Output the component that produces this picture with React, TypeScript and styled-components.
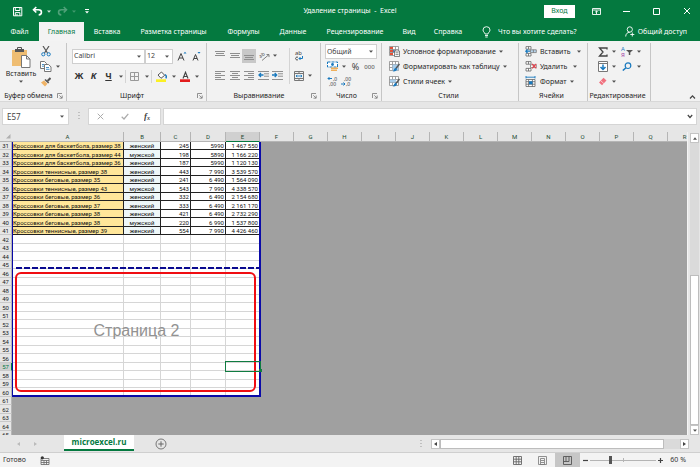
import React from "react";
import styled, { createGlobalStyle, css } from "styled-components";

const GREEN = "#04793f";
const UI = `"Noto Sans", "Open Sans", sans-serif`;
const SHEET = `Roboto, "Open Sans", sans-serif`;

const GlobalStyle = createGlobalStyle`
  *, *::before, *::after { box-sizing: border-box; }
  body { margin: 0; font-family: ${UI}; font-size: 7px; line-height: 10px; color: #262626; }
  button, input, select { font: inherit; color: inherit; margin: 0; padding: 0; border: 0; background: none; border-radius: 0; }
  button { display: inline-flex; align-items: center; justify-content: center; cursor: pointer; white-space: nowrap; }
  svg { display: block; flex: none; }
`;

const Window = styled.div`
  display: flex;
  flex-direction: column;
  height: 100vh;
  overflow: hidden;
  background: #e6e6e6;
`;

/* ---------- title bar ---------- */
const TitleBar = styled.header`
  display: grid;
  grid-template-columns: 1fr auto 1fr;
  align-items: center;
  height: 22px;
  flex: none;
  background: ${GREEN};
  color: #fff;
`;
const QuickAccess = styled.div`
  display: flex;
  align-items: center;
  padding-left: 12px;
  gap: 4px;
`;
const QuickButton = styled.button<{ $gap?: number; $dim?: boolean }>`
  margin-left: ${(p) => p.$gap ?? 0}px;
  opacity: ${(p) => (p.$dim ? 0.3 : 1)};
`;
const Title = styled.h1`
  margin: 0;
  font-size: 7px;
  font-weight: 400;
  white-space: pre;
`;
const WindowControls = styled.div`
  display: flex;
  align-items: center;
  justify-content: flex-end;
  padding-right: 9px;
`;
const SignIn = styled.button`
  width: 31px;
  height: 13px;
  margin-right: 16px;
  background: #fff;
  color: ${GREEN};
`;
const ControlButton = styled.button<{ $w: number }>`
  width: ${(p) => p.$w}px;
  height: 14px;
  justify-content: flex-end;
`;

/* ---------- ribbon tabs ---------- */
const TabBar = styled.nav`
  display: flex;
  height: 19px;
  flex: none;
  background: ${GREEN};
  color: #fff;
`;
const RibbonTab = styled.button<{ $w: number; $active?: boolean }>`
  width: ${(p) => p.$w}px;
  height: 19px;
  ${(p) => p.$active && css`background: #f3f3f3; color: ${GREEN};`}
`;
const TellMe = styled.button`
  margin-left: 10px;
  gap: 7px;
`;
const Share = styled.button`
  margin-left: auto;
  margin-right: 13px;
  gap: 3px;
`;

/* ---------- ribbon ---------- */
const Ribbon = styled.section`
  display: flex;
  height: 61px;
  flex: none;
  padding-top: 2px;
  background: #f2f2f2;
  border-bottom: 1px solid #d8d8d8;
`;
const Group = styled.div<{ $w: number }>`
  display: flex;
  flex-direction: column;
  width: ${(p) => p.$w}px;
  border-right: 1px solid #c6c6c6;
`;
const GroupBody = styled.div`
  flex: 1;
  min-height: 0;
  padding-top: 1px;
`;
const GroupFooter = styled.div`
  display: flex;
  align-items: center;
  height: 10px;
  padding-right: 3px;
  white-space: nowrap;
`;
const GroupLabel = styled.span`
  flex: 1;
  text-align: center;
`;
const Collapse = styled.button`
  align-self: flex-end;
  margin: 0 4px 1px auto;
`;
const ToolRow = styled.div<{ $h: number; $gap?: number; $pad?: number }>`
  display: flex;
  align-items: center;
  height: ${(p) => p.$h}px;
  gap: ${(p) => p.$gap ?? 0}px;
  padding-left: ${(p) => p.$pad ?? 0}px;
`;
const Tool = styled.button<{ $w: number; $on?: boolean }>`
  width: ${(p) => p.$w}px;
  height: 14px;
  background: ${(p) => (p.$on ? "#c8c8c8" : "transparent")};
`;
const SplitRule = styled.span<{ $h: number }>`
  width: 1px;
  height: ${(p) => p.$h}px;
  background: #d4d4d4;
`;
const ClipboardGrid = styled.div`
  display: grid;
  grid-template-columns: 38px 1fr;
  height: 100%;
  padding-left: 2px;
`;
const PasteButton = styled.button`
  flex-direction: column;
  justify-content: flex-start;
  padding-top: 3px;
  gap: 1px;
`;
const Stack = styled.div`
  display: flex;
  flex-direction: column;
`;
const SelectBox = styled.label<{ $w: number }>`
  display: flex;
  align-items: center;
  width: ${(p) => p.$w}px;
  height: 15px;
  padding-right: 3px;
  background: #fff;
  border: 1px solid #cfcfcf;
  select {
    appearance: none;
    flex: 1;
    min-width: 0;
    height: 100%;
    padding-left: 1px;
    color: #444;
    outline: 0;
  }
`;
const Letter = styled.span<{ $kind?: "italic" | "underline" }>`
  font-size: 9px;
  font-weight: 700;
  color: #333;
  font-style: ${(p) => (p.$kind === "italic" ? "italic" : "normal")};
  text-decoration: ${(p) => (p.$kind === "underline" ? "underline" : "none")};
`;
const NumberGlyph = styled.span<{ $size: number }>`
  font-size: ${(p) => p.$size}px;
  color: #444;
`;
const CommandButton = styled.button<{ $gap?: number }>`
  height: 15px;
  gap: 3px;
  > svg:last-child { margin-left: ${(p) => p.$gap ?? 0}px; }
`;
const AlignGrid = styled.div`
  display: grid;
  grid-template-columns: 1fr 1px 30px;
  padding-top: 4px;
`;

/* ---------- formula bar ---------- */
const FormulaBar = styled.section`
  display: flex;
  align-items: center;
  height: 30px;
  flex: none;
  padding: 6px 3px 7px 2px;
`;
const WhiteField = styled.label`
  display: flex;
  align-items: center;
  height: 17px;
  background: #fff;
  border: 1px solid #d5d5d5;
  input { flex: 1; min-width: 0; height: 100%; outline: 0; padding-left: 4px; font-size: 8px; color: #444; }
`;
const NameBox = styled(WhiteField)`
  width: 67px;
  padding-right: 4px;
`;
const FormulaField = styled(WhiteField)`
  flex: 1;
  padding-right: 3px;
`;
const Grip = styled.span`
  display: flex;
  justify-content: center;
  width: 19px;
`;
const FormulaActions = styled.div`
  display: flex;
  align-items: center;
  width: 73px;
  height: 17px;
  margin-right: 2px;
  background: #fff;
  border: 1px solid #d5d5d5;
  button { flex: 1; height: 100%; }
`;

/* ---------- sheet ---------- */
const Workspace = styled.main`
  display: flex;
  flex: 1;
  min-height: 0;
`;
const SheetView = styled.div`
  position: relative;
  flex: 1;
  min-width: 0;
  overflow: hidden;
  background: #a0a0a0;
`;
const Table = styled.table`
  table-layout: fixed;
  width: 0;
  border-collapse: separate;
  border-spacing: 0;
  font-family: ${SHEET};
  font-size: 6px;
  line-height: 7px;
  tbody tr { height: 8px; }
  tbody tr:nth-child(even) { height: 9px; }
  th, td { padding: 0; white-space: nowrap; font-weight: 400; }
`;
const Col = styled.col<{ $w: number }>`
  width: ${(p) => p.$w}px;
`;
const ColumnHead = styled.th<{ $on?: boolean }>`
  height: 10px;
  background: ${(p) => (p.$on ? "#d0d0d0" : "#e6e6e6")};
  border-right: 1px solid #b5b5b5;
  border-bottom: 1px solid ${(p) => (p.$on ? GREEN : "#b5b5b5")};
  color: #1d4b33;
`;
const Corner = styled.th`
  background: #e6e6e6;
  border-bottom: 1px solid #b5b5b5;
  svg { margin-left: 6px; }
`;
const RowHead = styled.th<{ $on?: boolean }>`
  background: ${(p) => (p.$on ? "#d0d0d0" : "#e6e6e6")};
  border-right: 1px solid ${(p) => (p.$on ? GREEN : "#b5b5b5")};
  border-bottom: 1px solid #c9c9c9;
  color: ${(p) => (p.$on ? GREEN : "#222")};
`;
const Cell = styled.td<{ $data?: boolean; $fill?: string; $align?: string }>`
  background: ${(p) => p.$fill ?? "#fff"};
  border-right: 1px solid ${(p) => (p.$data ? "#222" : "#d6d6d6")};
  border-bottom: 1px solid ${(p) => (p.$data ? "#222" : "#d6d6d6")};
  text-align: ${(p) => p.$align ?? "left"};
  color: #111;
  && { padding: 0 1px; }
`;
const PrintArea = styled.div`
  position: absolute;
  top: 10px;
  left: 12px;
  width: 249px;
  height: 255px;
  border: solid #0a0aa8;
  border-width: 0 2px 2px 1px;
  pointer-events: none;
`;
const PageTwo = styled.div`
  position: absolute;
  inset: 125px 0 0 1px;
  display: flex;
  align-items: center;
  justify-content: center;
  font: 16px/20px "Liberation Sans", Arial, sans-serif;
  color: #929292;
`;
const BreakLine = styled.svg`
  position: absolute;
  top: 0;
  left: 0;
  width: 100%;
  height: 2px;
`;
const Highlight = styled.div`
  position: absolute;
  inset: 5px 3px 3px 1px;
  border: 2px solid #f00d12;
  border-radius: 6px;
`;
const Selection = styled.div`
  position: absolute;
  top: 219px;
  left: 212px;
  width: 36px;
  height: 11px;
  border: 1px solid #107c41;
  &::after {
    content: "";
    position: absolute;
    right: -2px;
    bottom: -1px;
    width: 3px;
    height: 3px;
    background: #107c41;
  }
`;

/* ---------- scroll bars ---------- */
const VScroll = styled.div`
  display: flex;
  flex-direction: column;
  width: 13px;
  padding: 1px 1px 0 2px;
  border-left: 1px solid #f4f4f4;
`;
const ScrollButton = styled.button`
  width: 9px;
  height: 10px;
  flex: none;
  background: #fff;
  border: 1px solid #c4c4c4;
`;
const Track = styled.div<{ $grow: number }>`
  flex: ${(p) => p.$grow} 1 0;
  background: #dadada;
`;
const Thumb = styled(Track)`
  background: #fff;
  border: 1px solid #bdbdbd;
`;

/* ---------- sheet tabs and status ---------- */
const SheetBar = styled.div`
  display: flex;
  align-items: center;
  height: 18px;
  flex: none;
  border-bottom: 1px solid #cfcfcf;
`;
const SheetNav = styled.div`
  display: flex;
  align-items: center;
  justify-content: center;
  gap: 14px;
  width: 64px;
  padding-right: 10px;
`;
const SheetTab = styled.button`
  align-self: flex-start;
  width: 70px;
  height: 16px;
  background: #fff;
  border-bottom: 2px solid ${GREEN};
  color: ${GREEN};
  font-family: "Open Sans", "Noto Sans", sans-serif;
  font-size: 8px;
  font-weight: 700;
`;
const AddSheet = styled.button`
  margin-left: 21px;
`;
const HScroll = styled.div`
  display: flex;
  width: 269px;
  height: 10px;
  margin-left: auto;
  margin-right: 11px;
  > svg { margin-right: 9px; }
`;
const StatusBar = styled.footer`
  display: flex;
  align-items: center;
  height: 14px;
  flex: none;
  padding: 0 14px 0 3px;
  background: #f3f3f3;
  color: #333;
`;
const StatusIcon = styled.button`
  margin-left: 14px;
`;
const Views = styled.div`
  display: flex;
  margin-left: auto;
  margin-right: 3px;
`;
const ViewButton = styled.button<{ $on?: boolean }>`
  width: 25px;
  height: 14px;
  background: ${(p) => (p.$on ? "#c6c6c6" : "transparent")};
`;
const Zoom = styled.div`
  display: flex;
  align-items: center;
  gap: 2px;
  output { width: 21px; text-align: right; white-space: nowrap; }
`;
const ZoomRange = styled.input`
  appearance: none;
  width: 66px;
  height: 8px;
  background: linear-gradient(#b4b4b4, #b4b4b4) center / 100% 1px no-repeat,
    linear-gradient(#b4b4b4, #b4b4b4) center / 1px 4px no-repeat;
  &::-webkit-slider-thumb { appearance: none; width: 3px; height: 8px; background: #555; }
`;

/* ---------- icons ---------- */
const Caret = () => (
  <svg width="4" height="3" viewBox="0 0 4 3"><path d="M0 0.5h4L2 2.7z" fill="currentColor" opacity=".8" /></svg>
);
type DrawProps = { w: number; h: number; children: React.ReactNode };
const Draw = ({ w, h, children }: DrawProps) => (
  <svg width={w} height={h} viewBox={`0 0 ${w} ${h}`} fill="none" stroke="currentColor" strokeWidth="1">{children}</svg>
);
const Launcher = () => (
  <Draw w={6} h={6}><path d="M.5 5V.5H5M2.3 2.3L5 5M5.2 2.5v2.7H2.5" stroke="#777" strokeWidth=".8" /></Draw>
);
const Lines = ({ mode }: { mode: "top" | "middle" | "bottom" | "left" | "center" | "right" }) => {
  const vertical = mode === "top" || mode === "middle" || mode === "bottom";
  const start = mode === "top" ? 0.5 : mode === "middle" ? 2.5 : 4.5;
  const rows = vertical ? [start, start + 2, start + 4] : [0.5, 2.5, 4.5, 6.5, 8.5];
  return (
    <Draw w={10} h={10}>
      {rows.map((y, i) => {
        const short = i % 2 === 1;
        const a = !short || mode === "left" ? 0 : mode === "right" ? 4 : vertical ? 1 : 2;
        const b = !short || mode === "right" ? 10 : mode === "left" ? 6 : vertical ? 9 : 8;
        return <path key={y} d={`M${a} ${y}H${b}`} stroke="#8f8f8f" />;
      })}
    </Draw>
  );
};
const Indent = ({ left }: { left?: boolean }) => (
  <Draw w={11} h={9}>
    <path d="M0 .5h11M6 2.8h5M6 5.2h5M0 8.5h11" stroke="#8f8f8f" />
    <path d={left ? "M5.5 4H1M3 2L1 4l2 2" : "M0 4h4.5M2.7 2l2 2-2 2"} stroke="#1979be" strokeWidth="1.3" />
  </Draw>
);
const Decimals = ({ add }: { add?: boolean }) => (
  <svg width="11" height="11" viewBox="0 0 11 11" fontSize="5" fill="#444">
    <text x={add ? 6 : 3} y="5">{add ? ",0" : ",00"}</text>
    <text x={add ? 2 : 5} y="10">{add ? ",00" : ",0"}</text>
    <path d={add ? "M5 2.5H1M2.5 1L1 2.5 2.5 4" : "M0 8h4M2.5 6.5L4 8 2.5 9.5"} fill="none" stroke="#1979be" />
  </svg>
);
const StyleIcon = ({ kind }: { kind: "cond" | "table" | "cell" }) => (
  <Draw w={11} h={11}>
    <path d="M.5.5h9v9h-9zM.5 3.5h9M.5 6.5h9M3.5.5v9M6.5.5v9" stroke="#8a8a8a" strokeWidth=".8" fill="#fff" />
    {kind === "cond" ? (
      <>
        <path d="M1 1h3v2H1zM1 4h4v2H1zM1 7h3v2H1z" fill="#e05038" stroke="none" />
        <path d="M4 4.2h2v2H4z" fill="#3d84c6" stroke="none" />
        <path d="M5.5 5h5v5.5h-5zM6.5 6.8h3M6.5 8.6h3" fill="#fff" stroke="#555" strokeWidth=".7" />
      </>
    ) : (
      <>
        <path d={kind === "table" ? "M3.5 3.5h6v6h-6z" : "M1 3.5h6v3H1z"} fill="#a9cdea" stroke="none" />
        <path d="M10.5 3L6.5 8" stroke="#555" strokeWidth="1.4" />
        <path d="M6.8 7c-2 0-1.3 2.4-3.3 3.3 2.4.5 4.6-.6 4.4-2.3z" fill="#1979be" stroke="none" />
      </>
    )}
  </Draw>
);
const CellsIcon = ({ kind }: { kind: "insert" | "delete" | "format" }) => (
  <Draw w={12} h={11}>
    {kind === "format" ? (
      <>
        <path d="M1 1.2h9M1 0v2.4M10 0v2.4" stroke="#1979be" strokeWidth=".9" />
        <path d="M1 3.5h9v7H1zM1 5.7h9M1 8.2h9M3.6 3.5v7M7.4 3.5v7" stroke="#666" strokeWidth=".8" fill="#fff" />
        <path d="M4 5.3h3.5v3H4z" fill="#1979be" stroke="none" />
      </>
    ) : (
      <>
        <path d="M1 .6h5v2.6H1zM3.5.6v2.6M1 7.4h5V10H1zM3.5 7.4V10" stroke="#666" strokeWidth=".8" fill="#fff" />
        <path d="M5.5 3.8h5.8v2.8H5.5zM8.4 3.8v2.8" stroke="#777" strokeWidth=".8" fill={kind === "insert" ? "#b9d7ef" : "#fff"} />
        {kind === "insert"
          ? <path d="M5 5.2H.8M2.5 3.4L.8 5.2 2.5 7" stroke="#1979be" strokeWidth="1.2" />
          : <path d="M7 2.8l4.3 4.6M11.3 2.8L7 7.4" stroke="#e8434e" strokeWidth="1.2" />}
      </>
    )}
  </Draw>
);

/* ---------- data ---------- */
const products: string[][] = [
  ["Кроссовки для баскетбола, размер 38", "женский", "245", "5990", "1 467 550"],
  ["Кроссовки для баскетбола, размер 44", "мужской", "198", "5890", "1 166 220"],
  ["Кроссовки для баскетбола, размер 36", "женский", "187", "5990", "1 120 130"],
  ["Кроссовки теннисные, размер 38", "женский", "443", "7 990", "3 539 570"],
  ["Кроссовки беговые, размер 35", "женский", "241", "6 490", "1 564 090"],
  ["Кроссовки теннисные, размер 43", "мужской", "543", "7 990", "4 338 570"],
  ["Кроссовки беговые, размер 36", "женский", "332", "6 490", "2 154 680"],
  ["Кроссовки беговые, размер 37", "женский", "333", "6 490", "2 161 170"],
  ["Кроссовки беговые, размер 38", "женский", "421", "6 490", "2 732 290"],
  ["Кроссовки беговые, размер 38", "мужской", "220", "6 990", "1 537 800"],
  ["Кроссовки теннисные, размер 39", "женский", "554", "7 990", "4 426 460"],
];
const letters = "ABCDEFGHIJKLMNOPQR".split("");
const firstWidths = [112, 37, 30, 35, 34];
const rowNumbers = Array.from({ length: 35 }, (_, i) => 31 + i);
const fills = ["#ffe699", "#eef7f8"];
const aligns = ["left", "center", "right", "right", "right"];
const tabs: [string, number][] = [
  ["Файл", 39], ["Главная", 45], ["Вставка", 46], ["Разметка страницы", 87], ["Формулы", 53],
  ["Данные", 46], ["Рецензирование", 78], ["Вид", 30], ["Справка", 48],
];

const Footer = ({ label, launcher }: { label: string; launcher?: boolean }) => (
  <GroupFooter>
    <GroupLabel>{label}</GroupLabel>
    {launcher && <button aria-label={`${label}: параметры`}><Launcher /></button>}
  </GroupFooter>
);

const Sheet = () => (
  <SheetView>
    <Table>
      <colgroup>
        <Col $w={12} />
        {letters.map((l, i) => <Col key={l} $w={firstWidths[i] ?? 34} />)}
      </colgroup>
      <thead>
        <tr>
          <Corner><Draw w={5} h={5}><path d="M4.5 0v4.5H0z" fill="#b0b0b0" stroke="none" /></Draw></Corner>
          {letters.map((l) => <ColumnHead key={l} $on={l === "E"}>{l}</ColumnHead>)}
        </tr>
      </thead>
      <tbody>
        {rowNumbers.map((n, r) => (
          <tr key={n}>
            <RowHead $on={n === 57}>{n}</RowHead>
            {n <= 60 && firstWidths.map((_, c) => (
              <Cell key={c} $data={r < products.length} $fill={r < products.length ? fills[c] : undefined} $align={aligns[c]}>
                {products[r]?.[c]}
              </Cell>
            ))}
          </tr>
        ))}
      </tbody>
    </Table>
    <PrintArea>
      <PageTwo>
        <BreakLine><path d="M2 1H247" stroke="#0a0a90" strokeWidth="2" strokeDasharray="6 2" /></BreakLine>
        Страница 2
        <Highlight />
      </PageTwo>
      <Selection />
    </PrintArea>
  </SheetView>
);

export default function App() {
  return (
    <Window>
      <GlobalStyle />
      <TitleBar>
        <QuickAccess>
          <QuickButton aria-label="Сохранить">
            <Draw w={11} h={11}><path d="M1.5 1.5h8.3v8.3H1.5zM3.3 1.5v3h4.6v-3M3.3 9.8V6.6h4.6v3.2M5 8v1.8" /></Draw>
          </QuickButton>
          <QuickButton aria-label="Отменить" $gap={5}>
            <Draw w={11} h={10}><path d="M4.3 1L1.5 3.7l2.8 2.8M1.5 3.7h5c4 0 3.8 5 .2 5.2" strokeWidth="1.6" /></Draw>
          </QuickButton>
          <QuickButton aria-label="Список отмены"><Caret /></QuickButton>
          <QuickButton aria-label="Повторить" $gap={2} $dim>
            <Draw w={11} h={10}><path d="M6.7 1l2.8 2.7-2.8 2.8M9.5 3.7h-5c-4 0-3.8 5-.2 5.2" strokeWidth="1.6" /></Draw>
          </QuickButton>
          <QuickButton aria-label="Список повтора" $dim><Caret /></QuickButton>
          <QuickButton aria-label="Настройка панели" $gap={5}>
            <Draw w={4} h={5}><path d="M0 .5h4" /><path d="M0 2.3h4L2 4.5z" fill="#fff" stroke="none" /></Draw>
          </QuickButton>
        </QuickAccess>
        <Title>{"Удаление страницы  -  Excel"}</Title>
        <WindowControls>
          <SignIn>Вход</SignIn>
          <ControlButton $w={10} aria-label="Параметры ленты">
            <Draw w={9} h={7}><path d="M.5.5h8v6h-8zM.5 2h8M4.5 6V3M3.2 4.2l1.3-1.3 1.3 1.3" strokeWidth=".9" /></Draw>
          </ControlButton>
          <ControlButton $w={29} aria-label="Свернуть"><Draw w={7} h={7}><path d="M0 3.5h7" /></Draw></ControlButton>
          <ControlButton $w={30} aria-label="Развернуть"><Draw w={7} h={7}><path d="M.5.5h6v6h-6z" /></Draw></ControlButton>
          <ControlButton $w={31} aria-label="Закрыть"><Draw w={8} h={8}><path d="M1 1l6 6M7 1L1 7" /></Draw></ControlButton>
        </WindowControls>
      </TitleBar>

      <TabBar>
        {tabs.map(([name, w]) => <RibbonTab key={name} $w={w} $active={name === "Главная"}>{name}</RibbonTab>)}
        <TellMe>
          <Draw w={9} h={12}><path d="M3 8C3 6.5 1 6 1 4a3.5 3.3 0 017 0c0 2-2 2.5-2 4zM3 9.5h3M3.3 11h2.4" strokeWidth=".9" /></Draw>
          Что вы хотите сделать?
        </TellMe>
        <Share>
          <Draw w={10} h={11}><path d="M4.8 6.2a2.6 2.7 0 110-5.4 2.6 2.7 0 010 5.4zM.7 10.5c0-2.5 1.6-4.2 4-4.2M7.3 6.5v4M5.3 8.5h4" strokeWidth=".9" /></Draw>
          Общий доступ
        </Share>
      </TabBar>

      <Ribbon>
        <Group $w={67}>
          <GroupBody>
            <ClipboardGrid>
              <PasteButton>
                <Draw w={20} h={21}>
                  <path d="M1 3h15v16H1z" fill="#efbd72" stroke="none" />
                  <path d="M4 2h9v3H4z" fill="#555" stroke="none" /><path d="M6.5 2.5v-2h4v2" stroke="#555" />
                  <path d="M10.5 8.5h5l3.5 3.5v8.5h-8.5zM15.5 8.5V12H19" fill="#fff" stroke="#777" />
                </Draw>
                Вставить
                <Caret />
              </PasteButton>
              <Stack>
                <ToolRow $h={15} $pad={1}>
                  <button aria-label="Вырезать">
                    <Draw w={10} h={11}>
                      <path d="M2 0l4.5 7M8 0L3.5 7" stroke="#555" strokeWidth="1.2" />
                      <circle cx="2.3" cy="8.3" r="1.6" stroke="#1979be" /><circle cx="7.7" cy="8.3" r="1.6" stroke="#1979be" />
                    </Draw>
                  </button>
                </ToolRow>
                <ToolRow $h={15} $gap={4}>
                  <button aria-label="Копировать">
                    <Draw w={12} h={11}>
                      <path d="M.5.5h4l2 2v5h-6z" fill="#fff" stroke="#777" /><path d="M4.5 3.5h4l2.5 2.4v4.6H4.5z" fill="#fff" stroke="#777" />
                      <path d="M2 3.5h2M2 5.2h2M6 6.5h3M6 8.3h3.5" stroke="#1979be" strokeWidth=".8" />
                    </Draw>
                  </button>
                  <button aria-label="Параметры копирования"><Caret /></button>
                </ToolRow>
                <ToolRow $h={15} $pad={1}>
                  <button aria-label="Формат по образцу">
                    <Draw w={10} h={10}><path d="M9.5 1L6.5 4" stroke="#555" strokeWidth="2" /><path d="M4 2.5L7.7 6" stroke="#555" strokeWidth="1.6" /><path d="M3 3.5L0 5.5 4 9.5 6.5 6.7z" fill="#efb366" stroke="none" /></Draw>
                  </button>
                </ToolRow>
              </Stack>
            </ClipboardGrid>
          </GroupBody>
          <Footer label="Буфер обмена" launcher />
        </Group>

        <Group $w={140}>
          <GroupBody>
            <ToolRow $h={24} $pad={5}>
              <SelectBox $w={73}>
                <select aria-label="Шрифт"><option>Calibri</option></select><Caret />
              </SelectBox>
              <SelectBox $w={28}>
                <select aria-label="Размер шрифта"><option>12</option></select><Caret />
              </SelectBox>
              <Tool $w={17} aria-label="Увеличить шрифт">
                <Draw w={10} h={10}><path d="M1 9.5L4 2.5l3 7M2 7h4" stroke="#444" /><path d="M6.5 2.5L8 .8l1.5 1.7z" fill="#1979be" stroke="none" /></Draw>
              </Tool>
              <Tool $w={13} aria-label="Уменьшить шрифт">
                <Draw w={9} h={10}><path d="M1 9.5l2.5-6 2.5 6M2 7.5h3" stroke="#444" /><path d="M5.5 1h3L7 2.7z" fill="#1979be" stroke="none" /></Draw>
              </Tool>
            </ToolRow>
            <ToolRow $h={16} $pad={5}>
              <Tool $w={14} aria-label="Полужирный"><Letter>Ж</Letter></Tool>
              <Tool $w={15} aria-label="Курсив"><Letter $kind="italic">К</Letter></Tool>
              <Tool $w={15} aria-label="Подчёркнутый"><Letter $kind="underline">Ч</Letter></Tool>
              <Tool $w={9} aria-label="Вид подчёркивания"><Caret /></Tool>
              <SplitRule $h={13} />
              <Tool $w={17} aria-label="Границы">
                <Draw w={9} h={9}><path d="M.5.5h8v8h-8zM4.5 0v9M0 4.5h9" stroke="#999" /></Draw>
              </Tool>
              <Tool $w={8} aria-label="Виды границ"><Caret /></Tool>
              <SplitRule $h={13} />
              <Tool $w={18} aria-label="Цвет заливки">
                <Draw w={11} h={11}><path d="M2 4l3.5-3 3.2 3.3L5 7.3z" fill="#fff" stroke="#555" /><path d="M9 3.5c1.5 1 1.5 2.6.8 3.8" stroke="#1979be" strokeWidth="1.4" /><path d="M0 8.3h10V11H0z" fill="#fbf024" stroke="none" /></Draw>
              </Tool>
              <Tool $w={7} aria-label="Выбор заливки"><Caret /></Tool>
              <Tool $w={16} aria-label="Цвет текста">
                <Draw w={11} h={11}><path d="M3 7.5l2.5-6.3L8 7.5M3.8 5.5h3.4" stroke="#444" strokeWidth="1.1" /><path d="M0 8.3h10V11H0z" fill="#e21d1d" stroke="none" /></Draw>
              </Tool>
              <Tool $w={7} aria-label="Выбор цвета"><Caret /></Tool>
            </ToolRow>
          </GroupBody>
          <Footer label="Шрифт" launcher />
        </Group>

        <Group $w={114}>
          <GroupBody>
            <AlignGrid>
              <Stack>
                <ToolRow $h={15} $pad={5}>
                  <Tool $w={15} aria-label="По верхнему краю"><Lines mode="top" /></Tool>
                  <Tool $w={15} aria-label="По середине"><Lines mode="middle" /></Tool>
                  <Tool $w={14} $on aria-label="По нижнему краю"><Lines mode="bottom" /></Tool>
                  <Tool $w={16} aria-label="Ориентация">
                    <Draw w={11} h={10}>
                      <text x="1" y="6" fontSize="5" fill="#444" stroke="none" transform="rotate(-35 3 6)">ab</text>
                      <path d="M3 9.5l7-6M7.5 3.5H10v2.6" stroke="#777" strokeWidth=".9" />
                    </Draw>
                  </Tool>
                  <Tool $w={6} aria-label="Виды ориентации"><Caret /></Tool>
                </ToolRow>
                <ToolRow $h={25} $pad={5}>
                  <Tool $w={15} aria-label="По левому краю"><Lines mode="left" /></Tool>
                  <Tool $w={15} aria-label="По центру"><Lines mode="center" /></Tool>
                  <Tool $w={14} aria-label="По правому краю"><Lines mode="right" /></Tool>
                  <Tool $w={15} aria-label="Уменьшить отступ"><Indent left /></Tool>
                  <Tool $w={13} aria-label="Увеличить отступ"><Indent /></Tool>
                </ToolRow>
              </Stack>
              <SplitRule $h={36} />
              <Stack>
                <ToolRow $h={15} $pad={3}>
                  <Tool $w={12} aria-label="Перенести текст">
                    <Draw w={10} h={11}>
                      <text x="1" y="5" fontSize="6" fill="#444" stroke="none">ab</text>
                      <path d="M4 7.3a1.5 1.5 0 100 2.4" stroke="#444" strokeWidth=".9" />
                      <path d="M8.5 6v2.5H5M6.5 7L5 8.5 6.5 10" stroke="#1979be" />
                    </Draw>
                  </Tool>
                </ToolRow>
                <ToolRow $h={25} $pad={3}>
                  <Tool $w={12} aria-label="Объединить">
                    <Draw w={10} h={10}><path d="M.5.5h9v9h-9zM.5 2.5h9M.5 7.5h9M5 .5v2M5 7.5v2" stroke="#777" /><path d="M2 5h6M3.2 4L2 5l1.2 1M6.8 4L8 5 6.8 6" stroke="#1979be" strokeWidth=".9" /></Draw>
                  </Tool>
                  <Tool $w={10} aria-label="Виды объединения"><Caret /></Tool>
                </ToolRow>
              </Stack>
            </AlignGrid>
          </GroupBody>
          <Footer label="Выравнивание" launcher />
        </Group>

        <Group $w={61}>
          <GroupBody>
            <ToolRow $h={15} $pad={4}>
              <SelectBox $w={52}>
                <select aria-label="Формат числа"><option>Общий</option></select><Caret />
              </SelectBox>
            </ToolRow>
            <ToolRow $h={15} $pad={6}>
              <Tool $w={12} aria-label="Денежный формат">
                <Draw w={12} h={11}><path d="M.5 1h10v5H.5z" stroke="#1979be" fill="#fff" strokeDasharray="3 1" /><circle cx="5.5" cy="3.5" r="1.4" fill="#1979be" stroke="none" /><path d="M4 7.3h7M4 9.3h6" stroke="#efaf5b" strokeWidth="1.4" /></Draw>
              </Tool>
              <Tool $w={10} aria-label="Валюта"><Caret /></Tool>
              <Tool $w={13} aria-label="Проценты"><NumberGlyph $size={9}>%</NumberGlyph></Tool>
              <Tool $w={15} aria-label="Разделитель"><NumberGlyph $size={6}>000</NumberGlyph></Tool>
            </ToolRow>
            <ToolRow $h={15} $pad={6} $gap={3}>
              <Tool $w={11} aria-label="Увеличить разрядность"><Decimals add /></Tool>
              <Tool $w={11} aria-label="Уменьшить разрядность"><Decimals /></Tool>
            </ToolRow>
          </GroupBody>
          <Footer label="Число" launcher />
        </Group>

        <Group $w={137}>
          <GroupBody>
            <ToolRow $h={15} $pad={7}><CommandButton><StyleIcon kind="cond" />Условное форматирование<Caret /></CommandButton></ToolRow>
            <ToolRow $h={15} $pad={7}><CommandButton><StyleIcon kind="table" />Форматировать как таблицу<Caret /></CommandButton></ToolRow>
            <ToolRow $h={15} $pad={7}><CommandButton><StyleIcon kind="cell" />Стили ячеек<Caret /></CommandButton></ToolRow>
          </GroupBody>
          <Footer label="Стили" />
        </Group>

        <Group $w={69}>
          <GroupBody>
            <ToolRow $h={15} $pad={6}><CommandButton $gap={3}><CellsIcon kind="insert" />Вставить<Caret /></CommandButton></ToolRow>
            <ToolRow $h={15} $pad={6}><CommandButton $gap={3}><CellsIcon kind="delete" />Удалить<Caret /></CommandButton></ToolRow>
            <ToolRow $h={15} $pad={6}><CommandButton><CellsIcon kind="format" />Формат<Caret /></CommandButton></ToolRow>
          </GroupBody>
          <Footer label="Ячейки" />
        </Group>

        <Group $w={63}>
          <GroupBody>
            <ToolRow $h={15} $pad={9} $gap={2}>
              <Tool $w={11} aria-label="Сумма"><Draw w={10} h={10}><path d="M9 2.5V1H1.5L5 5 1.5 9H9V7.5" stroke="#444" strokeWidth="1.3" /></Draw></Tool>
              <Tool $w={8} aria-label="Функции"><Caret /></Tool>
              <Tool $w={14} aria-label="Сортировка и фильтр">
                <Draw w={12} h={12}>
                  <text x="0" y="5" fontSize="6" fill="#1979be" stroke="none">А</text><text x="0" y="11" fontSize="6" fill="#a33fa8" stroke="none">Я</text>
                  <path d="M5 4h7L9.3 6.5V9H7.8V6.5z" fill="#555" stroke="none" />
                </Draw>
              </Tool>
              <Tool $w={5} aria-label="Виды сортировки"><Caret /></Tool>
            </ToolRow>
            <ToolRow $h={15} $pad={9} $gap={2}>
              <Tool $w={11} aria-label="Заполнить"><Draw w={10} h={11}><path d="M.5.5h9v10h-9zM.5 2.5h9" stroke="#777" fill="#fff" /><path d="M5 3.5v5M2.5 6L5 8.5 7.5 6" stroke="#1979be" strokeWidth="1.5" /></Draw></Tool>
              <Tool $w={8} aria-label="Виды заполнения"><Caret /></Tool>
              <Tool $w={14} aria-label="Найти и выделить"><Draw w={10} h={9}><circle cx="6" cy="3.7" r="2.8" stroke="#1979be" strokeWidth="1.2" /><path d="M4 5.7L.8 8.5" stroke="#1979be" strokeWidth="1.5" /></Draw></Tool>
              <Tool $w={5} aria-label="Виды поиска"><Caret /></Tool>
            </ToolRow>
            <ToolRow $h={15} $pad={9} $gap={2}>
              <Tool $w={11} aria-label="Очистить"><Draw w={9} h={9}><path d="M5.5.7l3 2.8L4 8.3 1 5.5z" fill="#f0717f" stroke="none" /><path d="M2.8 3.8l3 2.7" stroke="#fff" strokeWidth=".6" /></Draw></Tool>
              <Tool $w={8} aria-label="Виды очистки"><Caret /></Tool>
            </ToolRow>
          </GroupBody>
          <Footer label="Редактирование" />
        </Group>
        <Collapse aria-label="Свернуть ленту"><Draw w={7} h={6}><path d="M1 4.5l2.5-2.7L6 4.5" stroke="#444" strokeWidth="1.2" /></Draw></Collapse>
      </Ribbon>

      <FormulaBar>
        <NameBox><input aria-label="Имя ячейки" defaultValue="E57" /><Caret /></NameBox>
        <Grip><Draw w={2} h={9}><path d="M1 0v9" stroke="#999" strokeDasharray="1 2" /></Draw></Grip>
        <FormulaActions>
          <button aria-label="Отмена"><Draw w={7} h={7}><path d="M.7.7l5.6 5.6M6.3.7L.7 6.3" stroke="#aaa" /></Draw></button>
          <button aria-label="Ввод"><Draw w={8} h={7}><path d="M.7 3.8L3 6 7.3.8" stroke="#aaa" strokeWidth="1.2" /></Draw></button>
          <button aria-label="Вставить функцию"><Draw w={9} h={10}><text x="0" y="7" fontFamily="Liberation Serif, serif" fontStyle="italic" fontWeight="700" fontSize="9" fill="#444" stroke="none">f<tspan fontSize="6" dy="1">x</tspan></text></Draw></button>
        </FormulaActions>
        <FormulaField><input aria-label="Строка формул" /><Draw w={6} h={5}><path d="M.8 1L3 3.5 5.2 1" stroke="#444" strokeWidth="1.2" /></Draw></FormulaField>
      </FormulaBar>

      <Workspace>
        <Sheet />
        <VScroll>
          <ScrollButton aria-label="Вверх"><Draw w={4} h={3}><path d="M0 2.7h4L2 .3z" fill="#555" stroke="none" /></Draw></ScrollButton>
          <Track $grow={133} />
          <Thumb $grow={149} />
          <ScrollButton aria-label="Вниз"><Caret /></ScrollButton>
        </VScroll>
      </Workspace>

      <SheetBar>
        <SheetNav>
          <button aria-label="Предыдущий лист"><Draw w={3} h={4}><path d="M3 0v4L0 2z" fill="#bbb" stroke="none" /></Draw></button>
          <button aria-label="Следующий лист"><Draw w={3} h={4}><path d="M0 0v4l3-2z" fill="#bbb" stroke="none" /></Draw></button>
        </SheetNav>
        <SheetTab>microexcel.ru</SheetTab>
        <AddSheet aria-label="Новый лист"><Draw w={12} h={12}><circle cx="6" cy="6" r="5" stroke="#777" /><path d="M3.3 6h5.4M6 3.3v5.4" stroke="#666" /></Draw></AddSheet>
        <HScroll>
          <Draw w={2} h={9}><path d="M1 1v8" stroke="#999" strokeDasharray="1 2" /></Draw>
          <ScrollButton aria-label="Влево"><Draw w={3} h={4}><path d="M3 0v4L0 2z" fill="#444" stroke="none" /></Draw></ScrollButton>
          <Thumb $grow={222} />
          <Track $grow={16} />
          <ScrollButton aria-label="Вправо"><Draw w={3} h={4}><path d="M0 0v4l3-2z" fill="#444" stroke="none" /></Draw></ScrollButton>
        </HScroll>
      </SheetBar>

      <StatusBar>
        Готово
        <StatusIcon aria-label="Запись макроса"><Draw w={10} h={9}><path d="M1 2.5h8v6H1zM1 4.5h8M1 6.5h8M4 4.5v4M6.5 4.5v4" stroke="#666" strokeWidth=".8" /><circle cx="2.3" cy="1.8" r="1.6" fill="#333" stroke="none" /></Draw></StatusIcon>
        <Views>
          <ViewButton aria-label="Обычный"><Draw w={9} h={9}><path d="M.5.5h8v8h-8zM.5 3.2h8M.5 5.8h8M3.2.5v8M5.8.5v8" stroke="#666" strokeWidth=".9" /></Draw></ViewButton>
          <ViewButton aria-label="Разметка страницы"><Draw w={9} h={9}><path d="M.5.5h8v8h-8zM2.5 2.5h4v6h-4zM3 4.5h3M3 6.5h3" stroke="#777" strokeWidth=".8" /></Draw></ViewButton>
          <ViewButton $on aria-label="Страничный режим"><Draw w={9} h={9}><path d="M.5.5h8v8h-8zM3 .5v5M6 .5v5M.5 5.5H6" stroke="#555" strokeWidth=".9" /></Draw></ViewButton>
        </Views>
        <Zoom>
          <button aria-label="Уменьшить"><Draw w={5} h={5}><path d="M0 2.5h5" stroke="#444" strokeWidth="1.2" /></Draw></button>
          <ZoomRange id="zoom" type="range" min={10} max={180} defaultValue={60} aria-label="Масштаб" />
          <button aria-label="Увеличить"><Draw w={5} h={5}><path d="M0 2.5h5M2.5 0v5" stroke="#444" strokeWidth="1.2" /></Draw></button>
          <output htmlFor="zoom">60 %</output>
        </Zoom>
      </StatusBar>
    </Window>
  );
}
